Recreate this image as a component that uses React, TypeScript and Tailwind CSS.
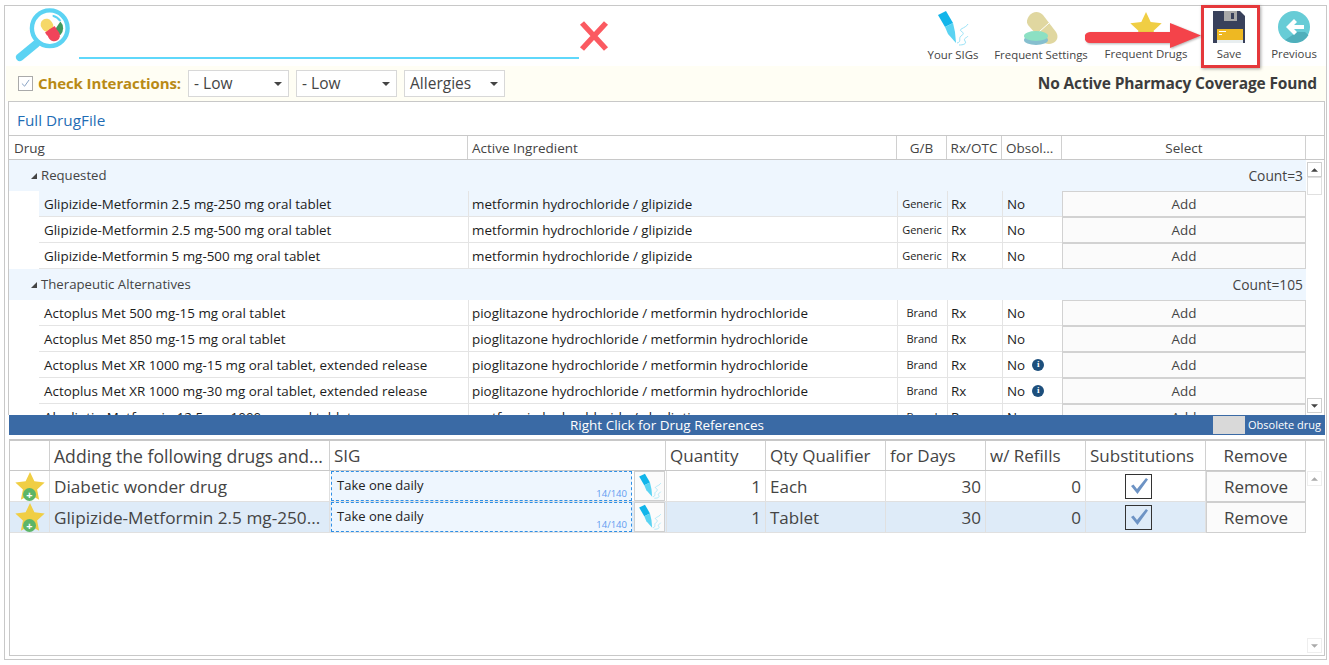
const topCols = "grid grid-cols-[459px_429px_50px_55px_60px_244px]";
const bottomCols = "grid grid-cols-[40px_280px_336px_100px_120px_100px_100px_120px_100px]";

const requested = [
  ["Glipizide-Metformin 2.5 mg-250 mg oral tablet", "metformin hydrochloride / glipizide", "Generic", false],
  ["Glipizide-Metformin 2.5 mg-500 mg oral tablet", "metformin hydrochloride / glipizide", "Generic", false],
  ["Glipizide-Metformin 5 mg-500 mg oral tablet", "metformin hydrochloride / glipizide", "Generic", false],
] as const;

const alternatives = [
  ["Actoplus Met 500 mg-15 mg oral tablet", "pioglitazone hydrochloride / metformin hydrochloride", "Brand", false],
  ["Actoplus Met 850 mg-15 mg oral tablet", "pioglitazone hydrochloride / metformin hydrochloride", "Brand", false],
  ["Actoplus Met XR 1000 mg-15 mg oral tablet, extended release", "pioglitazone hydrochloride / metformin hydrochloride", "Brand", true],
  ["Actoplus Met XR 1000 mg-30 mg oral tablet, extended release", "pioglitazone hydrochloride / metformin hydrochloride", "Brand", true],
  ["Alogliptin-Metformin 12.5 mg-1000 mg oral tablet", "metformin hydrochloride / alogliptin", "Brand", false],
] as const;

const Star = ({ className }: { className: string }) => (
  <svg viewBox="0 0 32 30" className={className}>
    <path d="M16 0l4.7 10 11 1.3-8.1 7.5 2.2 10.9L16 24.3 6.2 29.7l2.2-10.9L.3 11.3l11-1.3z" fill="#f0ce44" />
  </svg>
);

const PenIcon = ({ className }: { className: string }) => (
  <svg viewBox="0 0 32 36" className={className}>
    <path d="M1 5l8-4 7 12-8 4z" fill="#12b5ea" />
    <path d="M8 17l8-4 2 9 1 11-8-9z" fill="#5ad3f2" />
    <path d="M20 33c5-1 1-5 4-7s3-3 0-5 5-3 7-7M22 35c4 0 8-1 6-4s2-3 3-5" fill="none" stroke="#9be3f7" strokeWidth="1" />
  </svg>
);

const Header = ({ children, className = "" }: { children?: React.ReactNode; className?: string }) => (
  <div className={`flex items-center border-r border-[#d0d0d0] px-[4px] pt-[1px] overflow-hidden whitespace-nowrap ${className}`}>{children}</div>
);

const GroupRow = ({ name, count }: { name: string; count: string }) => (
  <div className="flex shrink-0 items-center justify-between h-[31px] w-[1297px] bg-[#eef6fe] pl-[22px] pr-[3px] pt-[1px] text-[13.2px] text-[#444]">
    <div className="flex items-center gap-[4px]">
      <svg viewBox="0 0 6 6" className="w-[6px] h-[6px]"><path d="M6 0v6H0z" fill="#444" /></svg>
      {name}
    </div>
    <span className="text-[13.8px]">{count}</span>
  </div>
);

const DrugRow = ({ row, hot }: { row: readonly [string, string, string, boolean]; hot?: boolean }) => {
  const tint = hot ? "bg-[#eef6fe]" : "";
  return (
    <div className={`${topCols} h-[26px] shrink-0 text-[13.4px] text-[#1c1c1c]`}>
      <div className={`ml-[30px] pl-[5px] pt-[1px] flex items-center border-b border-[#e4e4e4] whitespace-nowrap ${tint}`}>{row[0]}</div>
      <div className={`pl-[3px] pt-[1px] flex items-center border-l border-b border-[#e4e4e4] whitespace-nowrap ${tint}`}>{row[1]}</div>
      <div className={`flex items-center justify-center pr-[1px] pt-[1px] border-l border-b border-[#e4e4e4] text-[11px] ${tint}`}>{row[2]}</div>
      <div className={`pl-[3px] pt-[1px] flex items-center border-l border-b border-[#e4e4e4] ${tint}`}>Rx</div>
      <div className={`pl-[4px] pt-[1px] flex items-center gap-[7px] border-l border-b border-[#e4e4e4] ${tint}`}>
        No
        {row[3] && (
          <span className="flex items-center justify-center w-[12px] h-[12px] rounded-full bg-[#1d4f7c] text-white text-[9px] font-bold font-['Liberation_Serif',serif]">i</span>
        )}
      </div>
      <div className="flex items-center justify-center border border-[#d2d2d2] bg-[#fbfbfb] text-[#444]">Add</div>
    </div>
  );
};

const SelectBox = ({ label }: { label: string }) => (
  <div className="flex items-center justify-between w-[101px] h-[27px] border border-[#d8d8d8] bg-white pl-[5px] pr-[6px] text-[15.5px] text-[#444]">
    {label}
    <svg viewBox="0 0 8 4" className="w-[8px] h-[4px]"><path d="M0 0h8L4 4z" fill="#444" /></svg>
  </div>
);

const ToolItem = ({ label, width, children }: { label: string; width: string; children: React.ReactNode }) => (
  <div className={`flex flex-col items-center justify-between h-[52px] text-[11.4px] text-[#444] whitespace-nowrap ${width}`}>
    <div className="h-[36px] flex items-center justify-center">{children}</div>
    {label}
  </div>
);

const Check = () => (
  <div className="flex items-center justify-center w-[27px] h-[25px] border border-[#333]">
    <svg viewBox="0 0 20 18" className="w-[20px] h-[18px]">
      <path d="M2 9l2.5-1.5L8 12 17 1l2 1.5L8.5 17z" fill="#6d93c4" />
    </svg>
  </div>
);

const AddedRow = ({ name, unit, active }: { name: string; unit: string; active?: boolean }) => {
  const tint = active ? "bg-[#deebf8]" : "";
  return (
    <div className={`${bottomCols} h-[31px] text-[17px] text-[#444]`}>
      <div className={`relative flex items-center justify-center border-r border-b border-[#e0e0e0] ${tint}`}>
        <Star className="w-[30px] h-[28px]" />
        <span className="absolute left-[13px] bottom-[0px] flex items-center justify-center w-[13px] h-[13px] rounded-full bg-[#5cb568] text-white text-[11px] leading-none font-bold">+</span>
      </div>
      <div className={`pl-[4px] pt-[1px] flex items-center border-r border-b border-[#e0e0e0] overflow-hidden whitespace-nowrap text-[17.2px] ${tint}`}>{name}</div>
      <div className={`flex items-stretch border-b border-[#e0e0e0] ${tint}`}>
        <div className="relative ml-[1px] w-[301px] border border-dashed border-[#2e8fe6] bg-[#eef6fe] pl-[5px] text-[13px] text-[#222] leading-[26px]">
          Take one daily
          <span className="absolute right-[4px] bottom-[0px] text-[9.5px] leading-[13px] text-[#5f9bf0]">14/140</span>
        </div>
        <div className="ml-[2px] w-[31px] flex items-center justify-center border border-[#cfcfcf] bg-[#fbfbfb]">
          <PenIcon className="w-[24px] h-[26px]" />
        </div>
      </div>
      <div className={`flex items-center justify-end pr-[4px] pt-[1px] border-l border-r border-b border-[#e0e0e0] ${tint}`}>1</div>
      <div className={`pl-[4px] pt-[1px] flex items-center border-r border-b border-[#e0e0e0] ${tint}`}>{unit}</div>
      <div className={`flex items-center justify-end pr-[4px] pt-[1px] border-r border-b border-[#e0e0e0] ${tint}`}>30</div>
      <div className={`flex items-center justify-end pr-[4px] pt-[1px] border-r border-b border-[#e0e0e0] ${tint}`}>0</div>
      <div className={`flex items-center justify-center pr-[14px] border-r border-b border-[#e0e0e0] ${tint}`}><Check /></div>
      <div className="flex items-center justify-center border border-[#cfcfcf] bg-[#fbfbfb]">Remove</div>
    </div>
  );
};

export default function App() {
  return (
    <div className="h-[665px] w-[1329px] bg-white pl-[4px] pr-[2px] pt-[5px] pb-[5px] font-['Open_Sans',sans-serif]">
      <div className="relative h-full flex flex-col border border-[#c8c8c8]">
        {/* toolbar */}
        <div className="flex h-[60px] shrink-0">
          <div className="pl-[9px] pt-[2px]">
            <svg viewBox="0 0 60 58" className="w-[58px] h-[56px]">
              <path d="M6 51l17-14" stroke="#5cd3f3" strokeWidth="8" strokeLinecap="round" />
              <circle cx="37" cy="21" r="18.5" fill="#fff" stroke="#5cd3f3" strokeWidth="4.5" />
              <path d="M48 14a10 10 0 0 1 0 14l-8-2z" fill="#3e9a5f" />
              <path d="M40 7a14 14 0 0 1 9 6l-2 1a12 12 0 0 0-7-5z" fill="#5cd3f3" />
              <g transform="rotate(-35 37 22)">
                <rect x="31" y="10" width="12" height="14" rx="6" fill="#f6d868" />
                <rect x="31" y="22" width="12" height="14" rx="6" fill="#f0445a" />
                <rect x="31" y="22" width="12" height="4" fill="#f0445a" />
              </g>
            </svg>
          </div>
          <div className="flex items-end ml-[7px] w-[500px] pb-[7px]">
            <div className="w-full h-[2px] bg-[#5fd8fb]" />
          </div>
          <svg viewBox="0 0 30 30" className="w-[30px] h-[30px] mt-[15px]">
            <path d="M3 2l24 26M27 2L3 28" stroke="#fb5a61" strokeWidth="5.5" />
          </svg>
          <div className="ml-auto flex items-start pt-[4px] pr-[4px]">
            <ToolItem label="Your SIGs" width="w-[58px]">
              <PenIcon className="w-[32px] h-[36px]" />
            </ToolItem>
            <ToolItem label="Frequent Settings" width="w-[118px]">
              <svg viewBox="0 0 36 36" className="w-[36px] h-[36px]">
                <path d="M6 6c4-5 10-5 14-1l13 17c3 5 1 9-3 11-4 2-8 1-11-2L5 15c-2-3-1-6 1-9z" fill="#e0d7a0" />
                <path d="M16 22l10-9" stroke="#fff" strokeWidth="1" />
                <ellipse cx="13" cy="30" rx="12" ry="5" fill="#86bfcf" />
                <ellipse cx="13" cy="26" rx="12" ry="5" fill="#8ce0c3" />
              </svg>
            </ToolItem>
            <ToolItem label="Frequent Drugs" width="w-[92px]">
              <Star className="w-[32px] h-[30px]" />
            </ToolItem>
            <ToolItem label="Save" width="w-[74px]">
              <svg viewBox="0 0 32 32" className="w-[32px] h-[32px]">
                <path d="M0 0h27l5 5v27H0z" fill="#39415b" />
                <path d="M11 0h13v10H11z" fill="#a9a9a9" />
                <path d="M18 2h3v6h-3z" fill="#39415b" />
                <path d="M4 18h26v14H4z" fill="#e8eef0" />
                <path d="M4 18h26v11H4z" fill="#eeb822" />
                <path d="M6 20h7v1H6zM6 23h3v1H6z" fill="#fff" />
              </svg>
            </ToolItem>
            <ToolItem label="Previous" width="w-[56px]">
              <svg viewBox="0 0 32 32" className="w-[32px] h-[32px]">
                <circle cx="16" cy="16" r="16" fill="#67ccd6" />
                <path d="M19 21h8l3.5 3A16 16 0 0 1 16 32a16 16 0 0 1-9-3z" fill="#4fafbb" />
                <path d="M8 16l8-8 3 3-3 3h10v4H16l3 3-3 3z" fill="#fff" />
              </svg>
            </ToolItem>
          </div>
        </div>

        {/* interactions strip */}
        <div className="flex items-center h-[35px] shrink-0 ml-[1px] bg-[#fffef4] pl-[12px] pr-[9px]">
          <div className="flex items-center justify-center w-[15px] h-[15px] border border-[#aaa] bg-white mr-[5px]">
            <svg viewBox="0 0 10 10" className="w-[9px] h-[9px]"><path d="M1 5l3 3 5-7" fill="none" stroke="#7c99bd" strokeWidth="1" /></svg>
          </div>
          <span className="text-[15px] font-bold text-[#b98a15] mr-[7px] tracking-[-0.1px]">Check Interactions:</span>
          <div className="flex items-center gap-[7px]">
            <SelectBox label="- Low" />
            <SelectBox label="- Low" />
            <SelectBox label="Allergies" />
          </div>
          <span className="ml-auto text-[15.5px] font-bold text-[#3c3c3c] tracking-[-0.15px]">No Active Pharmacy Coverage Found</span>
        </div>

        {/* drug file grid */}
        <div className="ml-[3px] mr-[1px] h-[314px] shrink-0 flex flex-col border-l border-t border-[#c8c8c8] border-r overflow-hidden">
          <div className="h-[33px] shrink-0 flex items-center pt-[4px] pl-[8px] text-[15.3px] text-[#1f6db5]">Full DrugFile</div>
          <div className="flex h-[25px] shrink-0 border-t border-b border-[#c8c8c8] text-[13.5px] text-[#444]">
            <div className={topCols}>
              <Header className="pl-[5px]">Drug</Header>
              <Header>Active Ingredient</Header>
              <Header className="justify-center">G/B</Header>
              <Header className="justify-center px-[0px]">Rx/OTC</Header>
              <Header className="px-[3px]">Obsol...</Header>
              <Header className="justify-center pl-[5px]">Select</Header>
            </div>
          </div>
          <div className="flex min-h-0 flex-1">
            <div className="flex flex-col overflow-hidden w-[1297px]">
              <GroupRow name="Requested" count="Count=3" />
              {requested.map((r, i) => <DrugRow key={r[0]} row={r} hot={i === 0} />)}
              <GroupRow name="Therapeutic Alternatives" count="Count=105" />
              {alternatives.map((r) => <DrugRow key={r[0]} row={r} />)}
            </div>
            <div className="flex-1 flex flex-col justify-between py-[2px] pl-[1px] pr-[2px]">
              <div className="flex flex-col">
                <div className="h-[15px] border border-[#cfcfcf] flex items-center justify-center">
                  <svg viewBox="0 0 8 4" className="w-[7px] h-[4px]"><path d="M0 4h8L4 0z" fill="#444" /></svg>
                </div>
                <div className="h-[18px] border border-[#e0e0e0]" />
              </div>
              <div className="h-[15px] border border-[#cfcfcf] flex items-center justify-center">
                <svg viewBox="0 0 8 4" className="w-[7px] h-[4px]"><path d="M0 0h8L4 4z" fill="#444" /></svg>
              </div>
            </div>
          </div>
        </div>

        {/* legend bar */}
        <div className="relative flex items-center justify-center h-[20px] shrink-0 ml-[4px] mr-[1px] bg-[#3a6aa5] text-[13.5px] text-white">
          Right Click for Drug References
          <div className="absolute right-[4px] top-0 h-full flex items-center gap-[3px] text-[11px]">
            <span className="w-[32px] h-[18px] bg-[#d9d9d9]" />
            Obsolete drug
          </div>
        </div>

        {/* selected drugs */}
        <div className="mt-[4px] mb-[3px] ml-[4px] mr-[1px] flex-1 min-h-0 flex border border-t-2 border-[#c8c8c8]">
          <div className="flex flex-col w-[1296px]">
            <div className={`${bottomCols} h-[30px] shrink-0 border-b border-[#c8c8c8] text-[17px] text-[#444]`}>
              <Header />
              <Header className="text-[17.6px]">Adding the following drugs and...</Header>
              <Header>SIG</Header>
              <Header>Quantity</Header>
              <Header>Qty Qualifier</Header>
              <Header>for Days</Header>
              <Header>w/ Refills</Header>
              <Header>Substitutions</Header>
              <Header className="justify-center">Remove</Header>
            </div>
            <AddedRow name="Diabetic wonder drug" unit="Each" />
            <AddedRow name="Glipizide-Metformin 2.5 mg-250..." unit="Tablet" active />
          </div>
          <div className="flex-1 flex flex-col justify-between pt-[30px] pb-[2px] pl-[1px] pr-[2px]">
            <div className="h-[15px] border border-[#eee] flex items-center justify-center">
              <svg viewBox="0 0 8 4" className="w-[7px] h-[4px]"><path d="M0 4h8L4 0z" fill="#aaa" /></svg>
            </div>
            <div className="h-[15px] border border-[#eee] flex items-center justify-center">
              <svg viewBox="0 0 8 4" className="w-[7px] h-[4px]"><path d="M0 0h8L4 4z" fill="#aaa" /></svg>
            </div>
          </div>
        </div>

        {/* callout over the toolbar */}
        <div className="absolute left-[1196px] -top-[1px] w-[59px] h-[63px] border-[3px] border-[#e5383b] shadow-[1px_1px_3px_rgba(0,0,0,0.35)]" />
        <svg viewBox="0 0 116 26" className="absolute left-[1080px] top-[17px] w-[116px] h-[26px]" style={{ filter: "drop-shadow(1px 1px 1px rgba(0,0,0,0.3))" }}>
          <path d="M5 9h80V0l31 12.5L85 25v-5H5a5.5 5.5 0 0 1 0-11z" fill="#f4434a" />
        </svg>
      </div>
    </div>
  );
}
